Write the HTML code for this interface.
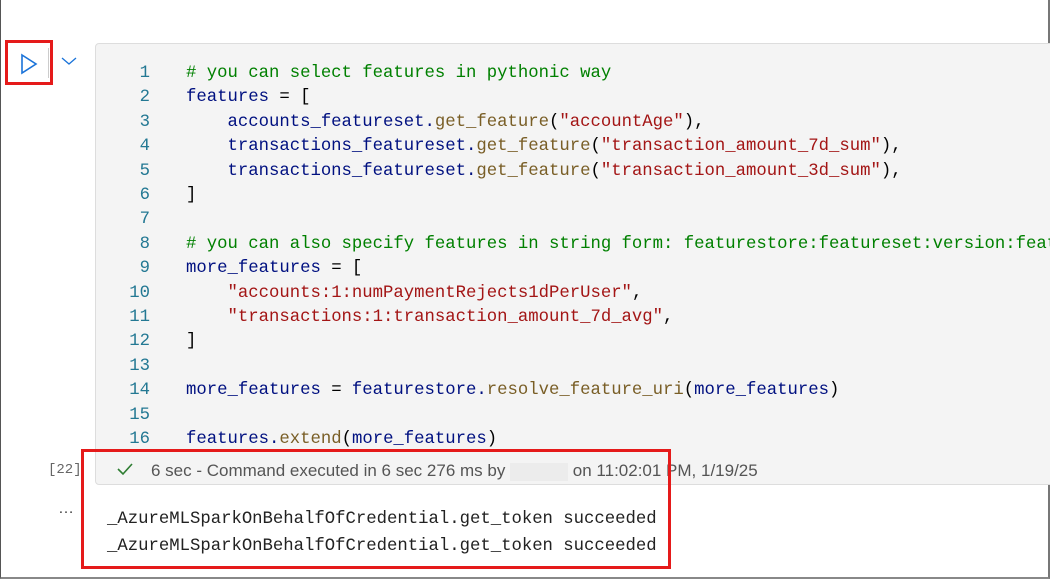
<!DOCTYPE html>
<html><head><meta charset="utf-8"><style>
html,body{margin:0;padding:0}
body{width:1050px;height:579px;position:relative;background:#fff;overflow:hidden;font-family:"Liberation Sans",sans-serif}
.frame{position:absolute;left:0;top:0;border-left:1px solid #555;border-right:2px solid #777;border-bottom:2px solid #888;box-sizing:border-box;width:1050px;height:579px}
.cell{position:absolute;left:95px;top:43px;width:960px;height:442px;background:#f4f4f4;border:1px solid #ddd;border-radius:4px;box-sizing:border-box}
.code{position:absolute;top:62px;left:0;font-family:"Liberation Mono",monospace;font-size:17.3px;line-height:24.4px}
.ln{position:absolute;top:0;left:100px;width:50px;text-align:right;color:#237893;white-space:pre}
.src{position:absolute;top:0;left:186px;color:#001080;white-space:pre}
.c{color:#008000}.f{color:#795e26}.s{color:#a31515}.p{color:#000}
.status{position:absolute;left:151px;top:461px;font-size:17px;color:#555;white-space:nowrap}
.out{position:absolute;left:107px;top:506px;font-family:"Liberation Mono",monospace;font-size:17.3px;line-height:27px;color:#222;white-space:pre}
.red{position:absolute;border:3px solid #e51a1a;box-sizing:border-box}
</style></head><body>
<div class="frame"></div>
<div class="cell"></div>
<svg style="position:absolute;left:19px;top:53px" width="20" height="22"><path d="M3 2 L17 11 L3 20 Z" fill="none" stroke="#1a73d9" stroke-width="1.6"/></svg>
<div style="position:absolute;left:48px;top:48px;width:1px;height:30px;background:#ccc"></div>
<svg style="position:absolute;left:61px;top:56px" width="16" height="10"><path d="M1 2 L8 8 L15 2" fill="none" stroke="#1a73d9" stroke-width="1.3"/></svg>
<div class="red" style="left:5px;top:40px;width:48px;height:45px"></div>
<div class="code"><div class="ln">1
2
3
4
5
6
7
8
9
10
11
12
13
14
15
16</div><div class="src"><span class="c"># you can select features in pythonic way</span>
features <span class="p">= [</span>
    accounts_featureset.<span class="f">get_feature</span><span class="p">(</span><span class="s">"accountAge"</span><span class="p">),</span>
    transactions_featureset.<span class="f">get_feature</span><span class="p">(</span><span class="s">"transaction_amount_7d_sum"</span><span class="p">),</span>
    transactions_featureset.<span class="f">get_feature</span><span class="p">(</span><span class="s">"transaction_amount_3d_sum"</span><span class="p">),</span>
<span class="p">]</span>

<span class="c"># you can also specify features in string form: featurestore:featureset:version:feature</span>
more_features <span class="p">= [</span>
    <span class="s">"accounts:1:numPaymentRejects1dPerUser"</span><span class="p">,</span>
    <span class="s">"transactions:1:transaction_amount_7d_avg"</span><span class="p">,</span>
<span class="p">]</span>

more_features <span class="p">=</span> featurestore.<span class="f">resolve_feature_uri</span><span class="p">(</span>more_features<span class="p">)</span>

features.<span class="f">extend</span><span class="p">(</span>more_features<span class="p">)</span></div></div>
<div style="position:absolute;left:48px;top:462px;font-family:'Liberation Mono',monospace;font-size:14px;color:#666">[22]</div>
<svg style="position:absolute;left:117px;top:462px" width="16" height="14"><path d="M1 7 L6 12 L15 2" fill="none" stroke="#2e7d32" stroke-width="1.6"/></svg>
<div class="status">6 sec - Command executed in 6 sec 276 ms by <span style="display:inline-block;width:58px;height:18px;background:#ececec;vertical-align:middle"></span> on 11:02:01 PM, 1/19/25</div>
<div style="position:absolute;left:58px;top:500px;font-size:16px;color:#444">…</div>
<div class="out">_AzureMLSparkOnBehalfOfCredential.get_token succeeded
_AzureMLSparkOnBehalfOfCredential.get_token succeeded</div>
<div class="red" style="left:81px;top:449px;width:590px;height:120px"></div>
</body></html>
